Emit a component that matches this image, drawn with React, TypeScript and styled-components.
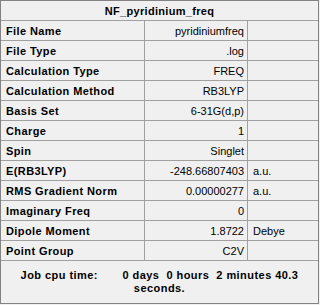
import React from "react";
import styled, { createGlobalStyle } from "styled-components";

const Global = createGlobalStyle`
  html, body { margin: 0; padding: 0; background: #f0f0f0; }
  body { font-family: "Liberation Sans", Arial, sans-serif; font-size: 11px; color: #000; }
`;

const Panel = styled.div`
  width: 319px;
  height: 304px;
  box-sizing: border-box;
  border: 1px solid #828282;
  background: #f0f0f0;
  display: flex;
  flex-direction: column;
`;

const Header = styled.div`
  height: 20px;
  box-sizing: border-box;
  border-bottom: 1px solid #a0a0a0;
  display: flex;
  align-items: center;
  justify-content: center;
  font-weight: bold;
  letter-spacing: 0.3px;
`;

const Row = styled.div`
  height: 20px;
  box-sizing: border-box;
  border-bottom: 1px solid #a0a0a0;
  display: grid;
  grid-template-columns: 144px 103px 1fr;
`;

const Cell = styled.div<{ $align?: "left" | "right"; $bold?: boolean; $last?: boolean }>`
  display: flex;
  align-items: center;
  justify-content: ${(p) => (p.$align === "right" ? "flex-end" : "flex-start")};
  padding: ${(p) => (p.$align === "right" ? "0 3px 0 0" : "0 0 0 5px")};
  font-weight: ${(p) => (p.$bold ? "bold" : "normal")};
  letter-spacing: ${(p) => (p.$bold ? "0.4px" : "0")};
  border-right: ${(p) => (p.$last ? "none" : "1px solid #a0a0a0")};
  white-space: nowrap;
  overflow: hidden;
`;

const Footer = styled.div`
  flex: 1;
  display: flex;
  align-items: center;
  justify-content: center;
  padding-bottom: 1px;
`;

const FooterText = styled.div`
  text-align: center;
  font-weight: bold;
  letter-spacing: 0.45px;
  line-height: 13px;
  white-space: pre;
`;

const rows: [string, string, string][] = [
  ["File Name", "pyridiniumfreq", ""],
  ["File Type", ".log", ""],
  ["Calculation Type", "FREQ", ""],
  ["Calculation Method", "RB3LYP", ""],
  ["Basis Set", "6-31G(d,p)", ""],
  ["Charge", "1", ""],
  ["Spin", "Singlet", ""],
  ["E(RB3LYP)", "-248.66807403", "a.u."],
  ["RMS Gradient Norm", "0.00000277", "a.u."],
  ["Imaginary Freq", "0", ""],
  ["Dipole Moment", "1.8722", "Debye"],
  ["Point Group", "C2V", ""],
];

export default function App() {
  return (
    <>
      <Global />
      <Panel>
        <Header>NF_pyridinium_freq</Header>
        {rows.map(([label, value, unit]) => (
          <Row key={label}>
            <Cell $bold>{label}</Cell>
            <Cell $align="right">{value}</Cell>
            <Cell $last>{unit}</Cell>
          </Row>
        ))}
        <Footer>
          <FooterText>
            {"Job cpu time:       0 days  0 hours  2 minutes 40.3"}
            <br />
            {"seconds."}
          </FooterText>
        </Footer>
      </Panel>
    </>
  );
}
